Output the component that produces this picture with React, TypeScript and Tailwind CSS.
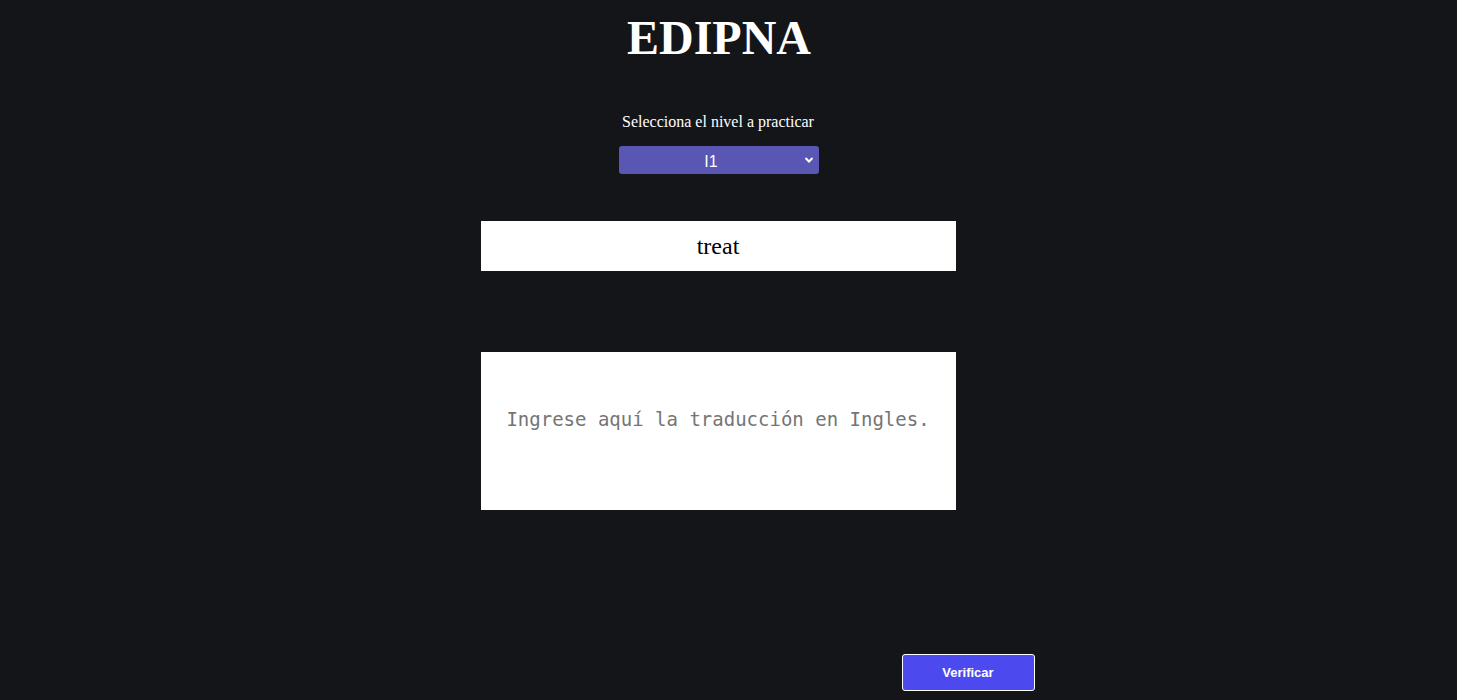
import { useState } from 'react'

const niveles = ['I1', 'I2', 'I3', 'A1', 'A2']

export default function App() {
  const [nivel, setNivel] = useState('I1')
  const [respuesta, setRespuesta] = useState('')

  return (
    <div className="min-h-screen bg-[#141518] font-['Liberation_Serif',serif]">
      <div className="w-[1436px] flex flex-col items-center">
        <h1 className="mt-[10px] ml-[2px] text-[48px] font-bold text-white leading-[55px]">EDIPNA</h1>

        <p className="mt-[48px] text-[16px] text-white leading-[18px]">Selecciona el nivel a practicar</p>

        <div className="relative mt-[15px] ml-[2px] w-[200px] h-[28px]">
          <select
            value={nivel}
            onChange={(e) => setNivel(e.target.value)}
            className="appearance-none w-full h-full rounded-[3px] bg-[#5a56b4] text-white text-[16px] text-center pr-[16px] pt-[3px] font-['Liberation_Sans',sans-serif] outline-none"
          >
            {niveles.map((n) => (
              <option key={n} value={n}>
                {n}
              </option>
            ))}
          </select>
          <svg
            className="pointer-events-none absolute right-[5px] top-[10px] w-[10px] h-[8px] text-white"
            viewBox="0 0 10 8"
            fill="none"
            stroke="currentColor"
            strokeWidth={2}
          >
            <path d="M1.5 2l3.5 3.5L8.5 2" />
          </svg>
        </div>

        <div className="mt-[47px] w-[475px] h-[50px] bg-white flex items-center justify-center">
          <span className="text-[24px] text-black leading-none">treat</span>
        </div>

        <textarea
          value={respuesta}
          onChange={(e) => setRespuesta(e.target.value)}
          placeholder="Ingrese aquí la traducción en Ingles."
          className="mt-[81px] w-[475px] h-[158px] bg-white resize-none outline-none text-center pt-[56px] text-[19px] leading-[22px] text-black placeholder:text-[#757575] font-['DejaVu_Sans_Mono',monospace]"
        />

        <div className="w-[475px] pl-[421px] mt-[144px]">
          <button className="w-[133px] h-[37px] rounded-[3px] border border-white bg-[#4c4aee] text-white text-[13px] font-bold font-['Liberation_Sans',sans-serif]">
            Verificar
          </button>
        </div>
      </div>
    </div>
  )
}
